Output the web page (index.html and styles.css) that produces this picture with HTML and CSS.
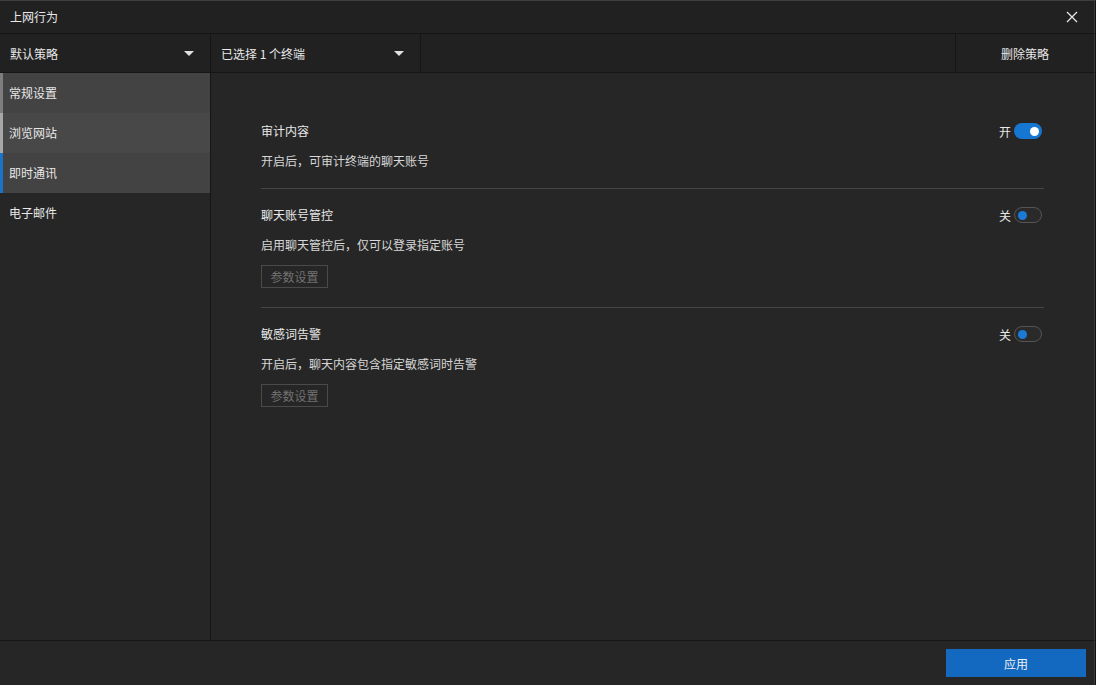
FILE: index.html
```html
<!DOCTYPE html>
<html lang="zh-CN">
<head>
<meta charset="utf-8">
<title>上网行为</title>
<link rel="stylesheet" href="styles.css">
</head>
<body>
<div class="window">
  <header class="titlebar">
    <span class="title">上网行为</span>
    <button class="close" aria-label="关闭">
      <svg width="12" height="12" viewBox="0 0 12 12"><path d="M1 1L11 11M11 1L1 11" stroke="#e6e6e6" stroke-width="1.3" fill="none"/></svg>
    </button>
  </header>
  <div class="toolbar">
    <div class="dropdown policy"><span>默认策略</span><i class="caret"></i></div>
    <div class="dropdown terminals"><span>已选择&nbsp;1&nbsp;个终端</span><i class="caret"></i></div>
    <div class="spacer"></div>
    <div class="tool-btn">删除策略</div>
  </div>
  <div class="main">
    <nav class="sidebar">
      <div class="nav-item general">常规设置</div>
      <div class="nav-item browse">浏览网站</div>
      <div class="nav-item active">即时通讯</div>
      <div class="nav-item">电子邮件</div>
    </nav>
    <section class="content">
      <div class="setting">
        <div class="setting-head">
          <span class="setting-title">审计内容</span>
          <label class="switch-wrap"><span>开</span><span class="switch on"><i></i></span></label>
        </div>
        <div class="setting-desc">开启后，可审计终端的聊天账号</div>
      </div>
      <div class="setting">
        <div class="setting-head">
          <span class="setting-title">聊天账号管控</span>
          <label class="switch-wrap"><span>关</span><span class="switch off"><i></i></span></label>
        </div>
        <div class="setting-desc">启用聊天管控后，仅可以登录指定账号</div>
        <button class="param-btn">参数设置</button>
      </div>
      <div class="setting last">
        <div class="setting-head">
          <span class="setting-title">敏感词告警</span>
          <label class="switch-wrap"><span>关</span><span class="switch off"><i></i></span></label>
        </div>
        <div class="setting-desc">开启后，聊天内容包含指定敏感词时告警</div>
        <button class="param-btn">参数设置</button>
      </div>
    </section>
  </div>
  <footer class="footer">
    <button class="apply">应用</button>
  </footer>
</div>
</body>
</html>
```
FILE: styles.css
```css
* { box-sizing: border-box; }
html, body {
  margin: 0;
  height: 100%;
  background: #262626;
}
body {
  font-family: "Noto Sans CJK SC", "Microsoft YaHei", "Liberation Sans", sans-serif;
  font-size: 12px;
  color: #e8e8e8;
}
.window {
  width: 1096px;
  height: 685px;
  display: flex;
  flex-direction: column;
  border-top: 1px solid #3e3e3e;
  border-right: 1px solid #111;
  background: #262626;
}
.window > * { border-right: 1px solid #3a3a3a; }
.titlebar {
  height: 33px;
  background: #212121;
  display: flex;
  align-items: center;
  justify-content: space-between;
  padding: 0 16px 0 10px;
  border-bottom: 1px solid #161616;
  flex: none;
}
.title { line-height: 20px; }
.close {
  background: none;
  border: 0;
  padding: 0;
  width: 12px;
  height: 12px;
  display: flex;
}
.toolbar {
  height: 39px;
  background: #212121;
  display: flex;
  border-bottom: 1px solid #161616;
  flex: none;
}
.dropdown {
  width: 210px;
  display: flex;
  align-items: center;
  justify-content: space-between;
  padding: 0 16px 0 10px;
  border-right: 1px solid #161616;
}
.policy { width: 211px; }
.caret {
  width: 0;
  height: 0;
  border-left: 5px solid transparent;
  border-right: 5px solid transparent;
  border-top: 5px solid #e0e0e0;
}
.spacer { flex: 1; border-right: 1px solid #161616; }
.tool-btn {
  width: 138px;
  display: flex;
  align-items: center;
  justify-content: center;
}
.main {
  flex: 1;
  display: flex;
  min-height: 0;
}
.sidebar {
  width: 211px;
  border-right: 1px solid #161616;
  background: #262626;
  flex: none;
}
.nav-item {
  height: 40px;
  display: flex;
  align-items: center;
  padding: 0 0 2px 6px;
  border-left: 3px solid transparent;
}
.nav-item.general { background: #434343; border-left-color: #7d7d7d; }
.nav-item.browse { background: #484848; border-left-color: #a8a8a8; }
.nav-item.active { background: #434343; border-left-color: #1a73c6; }
.content {
  flex: 1;
  padding: 32px 50px 0 50px;
}
.setting {
  padding: 16px 0 17px;
  border-bottom: 1px solid #454545;
}
.setting.last { border-bottom: 0; }
.setting-head {
  display: flex;
  align-items: center;
  justify-content: space-between;
  height: 20px;
}
.setting-title { line-height: 20px; }
.switch-wrap {
  display: flex;
  align-items: center;
  gap: 3px;
  margin-right: 2px;
}
.switch {
  width: 28px;
  height: 16px;
  border-radius: 8px;
  display: flex;
  align-items: center;
  padding: 0 3px;
}
.switch i {
  width: 9px;
  height: 9px;
  border-radius: 50%;
  display: block;
}
.switch.on {
  background: #1677d2;
  justify-content: flex-end;
}
.switch.on i { background: #fff; }
.switch.off {
  border: 1px solid #555;
  background: #2a2a2a;
  padding: 0 2px 0 3px;
}
.switch.off i { background: #1a7ad6; }
.setting-desc {
  margin-top: 10px;
  line-height: 20px;
  color: #d6d6d6;
}
.param-btn {
  display: block;
  margin-top: 10px;
  margin-bottom: 2px;
  width: 67px;
  height: 23px;
  border: 1px solid #4a4a4a;
  background: transparent;
  color: #727272;
  font: inherit;
  padding: 0;
}
.footer {
  height: 45px;
  border-top: 1px solid #161616;
  display: flex;
  align-items: center;
  justify-content: flex-end;
  padding-right: 8px;
  flex: none;
  background: #262626;
}
.apply {
  width: 140px;
  height: 28px;
  background: #1369c0;
  border: 0;
  color: #f0f0f0;
  font: inherit;
  font-size: 12px;
}
```
